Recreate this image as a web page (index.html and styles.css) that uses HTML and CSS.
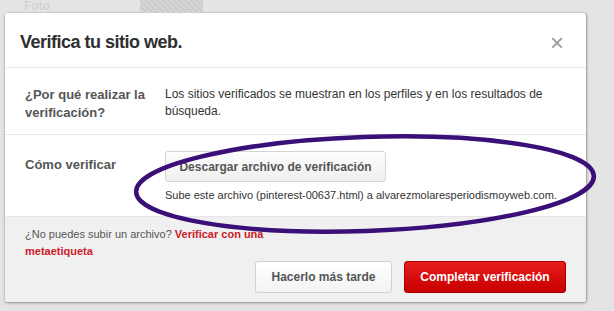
FILE: index.html
```html
<!DOCTYPE html>
<html lang="es">
<head>
    <meta charset="UTF-8">
    <title>Verifica tu sitio web</title>
    <link rel="stylesheet" href="styles.css">
</head>
<body>
<!--fondo de la pagina-->
<div class="backdrop">
    <span class="backdrop-label">Foto</span>
    <span class="backdrop-photo"></span>
</div>
<!--ventana modal-->
<div class="modal">
    <div class="modal-head">
        <h1>Verifica tu sitio web.</h1>
        <span class="close">&times;</span>
    </div>
    <div class="row row-why">
        <div class="label">¿Por qué realizar la verificación?</div>
        <div class="value">Los sitios verificados se muestran en los perfiles y en los resultados de búsqueda.</div>
    </div>
    <div class="row row-how">
        <div class="label">Cómo verificar</div>
        <div class="value">
            <button class="btn btn-download">Descargar archivo de verificación</button>
            <p class="hint">Sube este archivo (pinterest-00637.html) a alvarezmolaresperiodismoyweb.com.</p>
        </div>
    </div>
    <div class="modal-foot">
        <p class="alt">¿No puedes subir un archivo? <a href="#">Verificar con una metaetiqueta</a></p>
        <div class="actions">
            <button class="btn btn-later">Hacerlo más tarde</button>
            <button class="btn btn-red">Completar verificación</button>
        </div>
    </div>
</div>
<!--circulo morado-->
<svg class="mark" width="614" height="311" viewBox="0 0 614 311">
    <ellipse cx="365" cy="184" rx="229" ry="47" transform="rotate(-2 365 184)"
             fill="none" stroke="#3a0f78" stroke-width="4.5"/>
</svg>
</body>
</html>
```

FILE: styles.css
```css
* {
    margin: 0;
    padding: 0;
    box-sizing: border-box;
}

body {
    width: 614px;
    height: 311px;
    overflow: hidden;
    background-color: #e3e4e3;
    font-family: "Liberation Sans", Arial, sans-serif;
    color: #333;
    position: relative;
}

.backdrop {
    height: 13px;
    display: flex;
    align-items: flex-start;
    padding-left: 24px;
}

.backdrop-label {
    width: 116px;
    font-size: 12px;
    line-height: 13px;
    font-weight: bold;
    color: #d2d3d2;
}

.backdrop-photo {
    width: 63px;
    height: 13px;
    background: repeating-linear-gradient(45deg, #cdcdcd 0, #cdcdcd 2px, #d6d6d6 2px, #d6d6d6 4px);
}

.modal {
    margin-left: 5px;
    width: 581px;
    background-color: #fff;
    border-radius: 3px;
    box-shadow: 0 1px 3px rgba(0, 0, 0, 0.35), 1px 0 2px rgba(0, 0, 0, 0.2);
    overflow: hidden;
}

.modal-head {
    height: 55px;
    display: flex;
    align-items: center;
    justify-content: space-between;
    padding: 5px 22px 0 15px;
    border-bottom: 1px solid #e6e6e6;
}

.modal-head h1 {
    font-size: 18px;
    font-weight: bold;
    color: #2f2f2f;
    letter-spacing: -0.5px;
}

.close {
    font-size: 24px;
    color: #999;
    line-height: 1;
}

.row {
    display: grid;
    grid-template-columns: 140px 1fr;
    padding: 0 15px 0 20px;
    border-bottom: 1px solid #e6e6e6;
}

.row-why {
    height: 67px;
    padding-top: 18px;
}

.row-how {
    height: 82px;
    padding-top: 16px;
}

.label {
    font-size: 13px;
    font-weight: bold;
    color: #555;
    line-height: 18px;
    padding-right: 10px;
}

.row-how .label {
    padding-top: 5px;
}

.value {
    font-size: 12px;
    line-height: 17px;
    color: #333;
}

.btn {
    font-family: "Liberation Sans", Arial, sans-serif;
    font-weight: bold;
    font-size: 12px;
    border-radius: 3px;
    height: 32px;
    cursor: pointer;
}

.btn-download {
    width: 221px;
    height: 31px;
    background: linear-gradient(#fdfdfd, #efefef);
    border: 1px solid #d4d4d4;
    color: #555;
}

.hint {
    margin-top: 6px;
    font-size: 11px;
    line-height: 14px;
    color: #333;
}

.modal-foot {
    background-color: #f0f0f0;
    height: 85px;
    padding: 9px 20px 10px 20px;
}

.alt {
    font-size: 11px;
    line-height: 17px;
    color: #555;
    width: 270px;
}

.alt a {
    color: #cb2027;
    font-weight: bold;
    text-decoration: none;
}

.actions {
    display: flex;
    justify-content: flex-end;
    gap: 12px;
    margin-top: 1px;
}

.btn-later {
    width: 137px;
    background: linear-gradient(#ffffff, #f3f3f3);
    border: 1px solid #d2d2d2;
    color: #555;
}

.btn-red {
    width: 162px;
    background: linear-gradient(#e71b1b, #c80000);
    border: 1px solid #a80000;
    color: #fff;
}

.mark {
    position: absolute;
    top: 0;
    left: 0;
    pointer-events: none;
}
```
